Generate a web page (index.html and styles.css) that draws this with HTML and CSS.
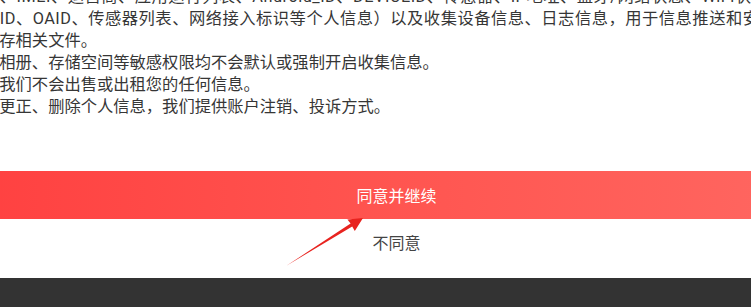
FILE: index.html
```html
<!DOCTYPE html>
<html lang="zh-CN">
<head>
<meta charset="utf-8">
<title>隐私政策</title>
<link rel="stylesheet" href="styles.css">
</head>
<body>
<div class="page">
  <div class="policy">
    <div class="line line-wide">表、IMEI、运营商、应用运行列表、Android_ID、DEVICEID、传感器、IP地址、蓝牙/网络状态、WiFi状态、WiFi状态</div>
    <div class="line line-wide">备ID、OAID、传感器列表、网络接入标识等个人信息）以及收集设备信息、日志信息，用于信息推送和安全风控</div>
    <div class="line">保存相关文件。</div>
    <div class="line">、相册、存储空间等敏感权限均不会默认或强制开启收集信息。</div>
    <div class="line">，我们不会出售或出租您的任何信息。</div>
    <div class="line">、更正、删除个人信息，我们提供账户注销、投诉方式。</div>
  </div>
  <div class="agree">同意并继续</div>
  <div class="disagree">不同意</div>
  <div class="footer"></div>
</div>
<svg class="arrow" width="751" height="307" viewBox="0 0 751 307" aria-hidden="true">
  <polygon points="286,266 350.6,223.6 347.4,219.6 363,218 354.8,231 352.2,226.4" fill="#e8231f"/>
</svg>
</body>
</html>
```

FILE: styles.css
```css
html, body {
  margin: 0;
  padding: 0;
}
body {
  position: relative;
  width: 751px;
  height: 307px;
  overflow: hidden;
  background: #ffffff;
  font-family: Roboto, "Noto Sans CJK SC", "Noto Sans", sans-serif;
}
.page {
  margin-left: -42px;
  width: 877px;
  height: 307px;
  display: flex;
  flex-direction: column;
}
.policy {
  margin-top: -14px;
  padding-left: 25px;
  font-size: 16.3px;
  line-height: 22px;
  color: #363636;
}
.line {
  white-space: nowrap;
}
.line-wide {
  letter-spacing: 0.5px;
}
.agree {
  margin-top: 53px;
  height: 48px;
  flex: none;
  display: flex;
  align-items: center;
  justify-content: center;
  color: #ffffff;
  font-size: 16px;
  background: linear-gradient(90deg, #ff4040 0%, #ff5550 50%, #ff6862 100%);
}
.disagree {
  flex: none;
  padding: 14px 0 23px;
  line-height: 22px;
  font-size: 16px;
  text-align: center;
  color: #444444;
}
.footer {
  flex: 1;
  background: #333333;
}
.arrow {
  position: absolute;
  left: 0;
  top: 0;
  pointer-events: none;
}
```
